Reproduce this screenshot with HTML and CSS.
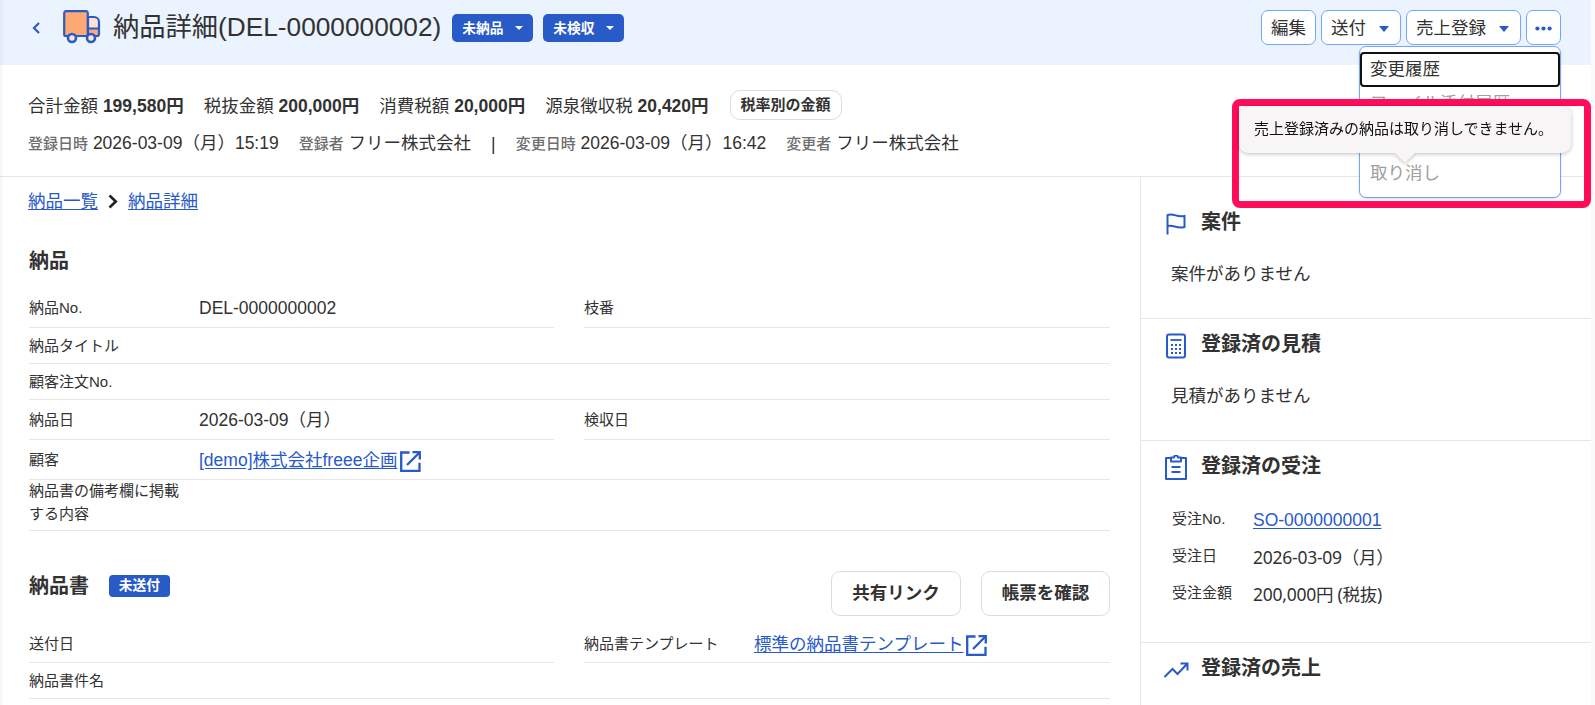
FILE: index.html
```html
<!DOCTYPE html>
<html lang="ja">
<head>
  <meta charset="UTF-8" />
  <meta name="viewport" content="width=device-width, initial-scale=1" />
  <title>納品詳細</title>
  <link rel="stylesheet" href="styles.css">
</head>
<body>
  <div class="page">
    <header>
      <a class="back" href="#">
        <svg width="9" height="14" viewBox="0 0 9 14"><path d="M7 2 L2 7 L7 12" fill="none" stroke="#285ac8" stroke-width="2.2"/></svg>
      </a>
      <svg class="truck" width="38" height="34" viewBox="0 0 38 34">
        <path d="M3 1.2h20a1.8 1.8 0 0 1 1.8 1.8v23H3a1.8 1.8 0 0 1-1.8-1.8V3A1.8 1.8 0 0 1 3 1.2z" fill="#ffa873" stroke="#285ac8" stroke-width="2.2"/>
        <path d="M25 7h6a5 5 0 0 1 5 5v14H25z" fill="#ffa873"/>
        <path d="M25 7h6a5 5 0 0 1 5 5v6H25z" fill="#ffe0d2"/>
        <path d="M25 7h6a5 5 0 0 1 5 5v12a2 2 0 0 1-2 2h-9zM25 18.5h11" fill="none" stroke="#285ac8" stroke-width="2.2"/>
        <circle cx="9" cy="28" r="4" fill="#ffe0d2" stroke="#285ac8" stroke-width="2.6"/>
        <circle cx="28" cy="28" r="4" fill="#ffe0d2" stroke="#285ac8" stroke-width="2.6"/>
      </svg>
      <h1>納品詳細(DEL-0000000002)</h1>
      <button class="status">未納品<span class="caret"></span></button>
      <button class="status">未検収<span class="caret"></span></button>

      <div class="actions">
        <button class="btn">編集</button>
        <button class="btn">送付<span class="caret"></span></button>
        <button class="btn">売上登録<span class="caret"></span></button>
        <div class="more">
          <button class="btn btn-more">
            <svg width="17" height="5" viewBox="0 0 17 5" fill="#285ac8"><circle cx="2.4" cy="2.5" r="2.1"/><circle cx="8.5" cy="2.5" r="2.1"/><circle cx="14.6" cy="2.5" r="2.1"/></svg>
          </button>
          <div class="menu">
            <div class="menu-item focused">変更履歴</div>
            <div class="menu-item disabled">ファイル添付履歴</div>
            <div class="menu-item disabled last">取り消し</div>
          </div>
        </div>
      </div>
    </header>

    <section class="summary">
      <div class="amounts">
        <span>合計金額 <b>199,580円</b></span>
        <span>税抜金額 <b>200,000円</b></span>
        <span>消費税額 <b>20,000円</b></span>
        <span>源泉徴収税 <b>20,420円</b></span>
        <button class="btn-tax">税率別の金額</button>
      </div>
      <div class="meta">
        <span><em>登録日時</em> 2026-03-09（月）15:19</span>
        <span><em>登録者</em> フリー株式会社</span>
        <span>|</span>
        <span><em>変更日時</em> 2026-03-09（月）16:42</span>
        <span><em>変更者</em> フリー株式会社</span>
      </div>
    </section>

    <div class="columns">
      <main>
        <nav class="breadcrumb">
          <a href="#">納品一覧</a>
          <svg width="10" height="15" viewBox="0 0 10 15"><path d="M1.5 1.5 L7.8 7.5 L1.5 13.5" fill="none" stroke="#222" stroke-width="2.6"/></svg>
          <a href="#">納品詳細</a>
        </nav>

        <h2 class="title-delivery">納品</h2>
        <div class="fields">
          <div class="field first"><label>納品No.</label><p>DEL-0000000002</p></div>
          <div class="field first"><label>枝番</label></div>
          <div class="field wide"><label>納品タイトル</label></div>
          <div class="field wide"><label>顧客注文No.</label></div>
          <div class="field tall"><label>納品日</label><p>2026-03-09（月）</p></div>
          <div class="field tall"><label>検収日</label></div>
          <div class="field wide tall"><label>顧客</label><p><a href="#">[demo]株式会社freee企画</a><svg class="external" width="21" height="21" viewBox="0 0 21 21"><path d="M9.5 1.5H1.2v18.3h18.3v-8M12.5 1.2h7.3v7.3M19.5 1.5L7 14" fill="none" stroke="#285ac8" stroke-width="2.3"/></svg></p></div>
          <div class="field wide note"><label>納品書の備考欄に掲載する内容</label></div>
        </div>

        <div class="title-row">
          <h2>納品書</h2>
          <span class="badge">未送付</span>
          <div class="title-buttons">
            <button class="btn-large">共有リンク</button>
            <button class="btn-large">帳票を確認</button>
          </div>
        </div>
        <div class="fields">
          <div class="field sent"><label>送付日</label></div>
          <div class="field sent"><label>納品書テンプレート</label><p><a href="#">標準の納品書テンプレート</a><svg class="external" width="21" height="21" viewBox="0 0 21 21"><path d="M9.5 1.5H1.2v18.3h18.3v-8M12.5 1.2h7.3v7.3M19.5 1.5L7 14" fill="none" stroke="#285ac8" stroke-width="2.3"/></svg></p></div>
          <div class="field wide"><label>納品書件名</label></div>
        </div>
      </main>

      <aside>
        <section class="panel panel-case">
          <h2>
            <svg width="26" height="26" viewBox="0 0 26 26"><path d="M4.5 23.5V4.2c5-3 8.5 2.500 17 .8v11c-8 2.500-11-3-17-1" fill="none" stroke="#285ac8" stroke-width="2"/></svg>
            案件
          </h2>
          <p class="empty">案件がありません</p>
        </section>
        <section class="panel">
          <h2>
            <svg width="26" height="26" viewBox="0 0 26 26"><rect x="4" y="1.500" width="18" height="23" rx="2" fill="none" stroke="#285ac8" stroke-width="2"/><path d="M7.500 7h11" stroke="#285ac8" stroke-width="1.800"/><path d="M8 12h11M8 16h11M8 20h11" stroke="#285ac8" stroke-width="2" stroke-dasharray="2 2"/></svg>
            登録済の見積
          </h2>
          <p class="empty">見積がありません</p>
        </section>
        <section class="panel panel-order">
          <h2>
            <svg width="26" height="26" viewBox="0 0 26 26"><path d="M7.500 3H3v21h20V3h-4.500M8 2.500v4h10v-4h-3a2 2 0 0 0-4 0zM8.500 12h9M8.500 17h9" fill="none" stroke="#285ac8" stroke-width="2" stroke-linejoin="round"/></svg>
            登録済の受注
          </h2>
          <dl>
            <dt>受注No.</dt><dd><a href="#">SO-0000000001</a></dd>
            <dt>受注日</dt><dd class="plain">2026-03-09（月）</dd>
            <dt>受注金額</dt><dd class="plain">200,000円 (税抜)</dd>
          </dl>
        </section>
        <section class="panel">
          <h2>
            <svg width="26" height="26" viewBox="0 0 26 26"><path d="M1.500 20l8-8 5 5L24 7M17.500 6.500H24.500v7" fill="none" stroke="#285ac8" stroke-width="2"/></svg>
            登録済の売上
          </h2>
        </section>
      </aside>
    </div>

    <div class="highlight"></div>
    <div class="tooltip">売上登録済みの納品は取り消しできません。</div>
  </div>
</body>
</html>
```

FILE: styles.css
```css
* {
  box-sizing: border-box;
}
body {
  margin: 0;
  height: 705px;
  overflow: hidden;
  background: #fafafa;
  color: #323232;
  font-family: "Liberation Sans", "Noto Sans CJK JP", sans-serif;
  font-size: 17.5px;
  line-height: 26px;
}
h1, h2, p, dl, dd {
  margin: 0;
}
button {
  font-family: inherit;
  color: inherit;
  cursor: pointer;
}
a {
  color: #285ac8;
  text-underline-offset: 2px;
}
svg {
  flex-shrink: 0;
}
.page {
  position: relative;
  width: 1591px;
  height: 705px;
  background: #fff;
  overflow: hidden;
}
/* soft edge of the side menu */
.page::before {
  content: "";
  position: absolute;
  left: 0;
  top: 0;
  bottom: 0;
  width: 4px;
  background: linear-gradient(to right, rgba(0,0,0,0.04), transparent);
}

/* header */
header {
  display: flex;
  height: 65px;
  padding: 10px 30px 0 32px;
  background: #ebf3ff;
}
.back {
  height: 14px;
  margin-top: 11px;
  line-height: 0;
}
.truck {
  margin-left: 22px;
}
h1 {
  margin: 0 11px 0 12px;
  font-size: 26.25px;
  font-weight: 400;
  line-height: 34px;
  white-space: nowrap;
}
.status {
  display: flex;
  align-items: center;
  width: 81px;
  height: 28px;
  margin: 4px 10px 0 0;
  padding: 0 10px 3px;
  border: none;
  border-radius: 5px;
  background: #285ac8;
  color: #fff;
  font-size: 13.75px;
  font-weight: 700;
}
.caret {
  border: 4px solid transparent;
  border-top-color: #fff;
  border-bottom: none;
  margin: 3px 0 0 11px;
}
.actions {
  display: flex;
  gap: 5px;
  margin-left: auto;
}
.btn {
  display: flex;
  align-items: center;
  height: 35px;
  padding: 0 9px 2px;
  border: 1px solid #73a5ff;
  border-radius: 7px;
  background: #fff;
  font-size: 17.5px;
  white-space: nowrap;
}
.btn .caret {
  border-width: 5px;
  border-top: 6px solid #285ac8;
  border-bottom: none;
  margin: 4px 2px 0 13px;
}
.btn-more {
  width: 35px;
  padding: 2px 0 0;
  justify-content: center;
}
.more {
  position: relative;
}
.menu {
  position: absolute;
  top: 36px;
  right: 0;
  width: 202px;
  height: 152px;
  padding-top: 5px;
  border: 1px solid #73a5ff;
  border-radius: 7px;
  background: #fff;
  box-shadow: 0 1px 2px rgba(0,0,0,0.15);
}
.menu-item {
  height: 35px;
  padding: 0 10px;
  line-height: 33px;
}
.menu-item.focused {
  padding: 0 8px;
  border: 2px solid #111;
  border-radius: 4px;
  line-height: 30px;
}
.menu-item.disabled {
  color: #a0a0a0;
}
.menu-item.last {
  margin-top: 35px;
}

/* summary */
.summary {
  height: 112px;
  padding: 25px 29px 0 28px;
  border-bottom: 1px solid #e6e6e6;
}
.amounts,
.meta {
  display: flex;
  align-items: center;
  gap: 20px;
  white-space: nowrap;
}
.amounts {
  height: 30px;
}
.amounts span {
  padding-top: 1px;
}
.btn-tax {
  width: 112px;
  height: 30px;
  margin-left: 1px;
  padding: 0 0 3px;
  border: 1px solid #dcdcdc;
  border-radius: 10px;
  background: #fff;
  font-size: 15px;
  font-weight: 700;
}
.meta {
  margin-top: 10px;
}
.meta em {
  color: #6e6e6e;
  font-size: 15px;
  font-style: normal;
  font-weight: 500;
}

/* main column */
.columns {
  display: flex;
  height: 528px;
}
main {
  width: 1140px;
  padding: 11px 30px 0 29px;
}
.breadcrumb {
  display: flex;
  align-items: center;
  gap: 10px;
  height: 26px;
  margin-left: -1px;
}
h2 {
  font-size: 20px;
  font-weight: 700;
  line-height: 30px;
}
.title-delivery {
  margin: 32px 0 10px;
}
.fields {
  display: grid;
  grid-template-columns: 525px 526px;
  column-gap: 30px;
}
.field {
  display: flex;
  align-items: center;
  height: 36px;
  border-bottom: 1px solid #e6e6e6;
}
.field label {
  width: 170px;
  padding-right: 15px;
  font-size: 15px;
  line-height: 23px;
}
.field p {
  display: flex;
  align-items: center;
  padding-top: 1px;
  white-space: nowrap;
}
.field.first {
  height: 42px;
  padding-top: 1px;
}
.field.wide {
  grid-column: 1 / 3;
}
.field.tall {
  height: 40px;
}
.field.note {
  height: 51px;
  padding-bottom: 7px;
}
.field.sent {
  height: 39px;
  padding-top: 1px;
}
.external {
  margin: 2px 0 0 3px;
}
.title-row {
  display: flex;
  height: 93px;
  padding-top: 40px;
}
.badge {
  width: 61px;
  height: 22px;
  margin: 4px 0 0 20px;
  border-radius: 4px;
  background: #285ac8;
  color: #fff;
  font-size: 13.75px;
  font-weight: 700;
  line-height: 21px;
  text-align: center;
}
.title-buttons {
  display: flex;
  gap: 20px;
  margin-left: auto;
}
.btn-large {
  width: 130px;
  height: 45px;
  padding: 0 0 4px;
  border: 1px solid #dcdcdc;
  border-radius: 9px;
  background: #fff;
  font-size: 17.5px;
  font-weight: 700;
}
.btn-large:last-child {
  width: 129px;
}

/* side column */
aside {
  flex: 1;
  border-left: 1px solid #e6e6e6;
}
.panel {
  height: 122px;
  padding: 10px 0 0 22px;
  border-bottom: 1px solid #e6e6e6;
}
.panel-case {
  height: 142px;
  padding-top: 30px;
}
.panel-order {
  height: 202px;
}
.panel h2 {
  display: flex;
  gap: 12px;
}
.panel h2 svg {
  margin-top: 4px;
}
.empty {
  margin: 24px 0 0 8px;
}
dl {
  display: grid;
  grid-template-columns: 81px 1fr;
  row-gap: 11px;
  margin: 26px 0 0 9px;
}
dt {
  font-size: 15px;
  line-height: 23px;
}
dd {
  line-height: 26px;
}
dd.plain {
  font-family: "Noto Sans", "Noto Sans CJK JP", sans-serif;
  letter-spacing: -0.25px;
}

/* overlay */
.highlight {
  position: absolute;
  left: 1232px;
  top: 99px;
  width: 359px;
  height: 109px;
  border: 7px solid #ff0d5b;
  border-radius: 8px;
}
.tooltip {
  position: absolute;
  left: 1239px;
  top: 106px;
  width: 332px;
  height: 47px;
  padding-left: 15px;
  border-radius: 9px;
  background: #f7f5f6;
  color: #111;
  font-size: 15px;
  line-height: 45px;
  white-space: nowrap;
  filter: drop-shadow(0 1px 2px rgba(0,0,0,0.25));
}
.tooltip::after {
  content: "";
  position: absolute;
  left: 156px;
  top: 47px;
  border: 10px solid transparent;
  border-top-color: #f7f5f6;
  border-bottom: none;
}
```
